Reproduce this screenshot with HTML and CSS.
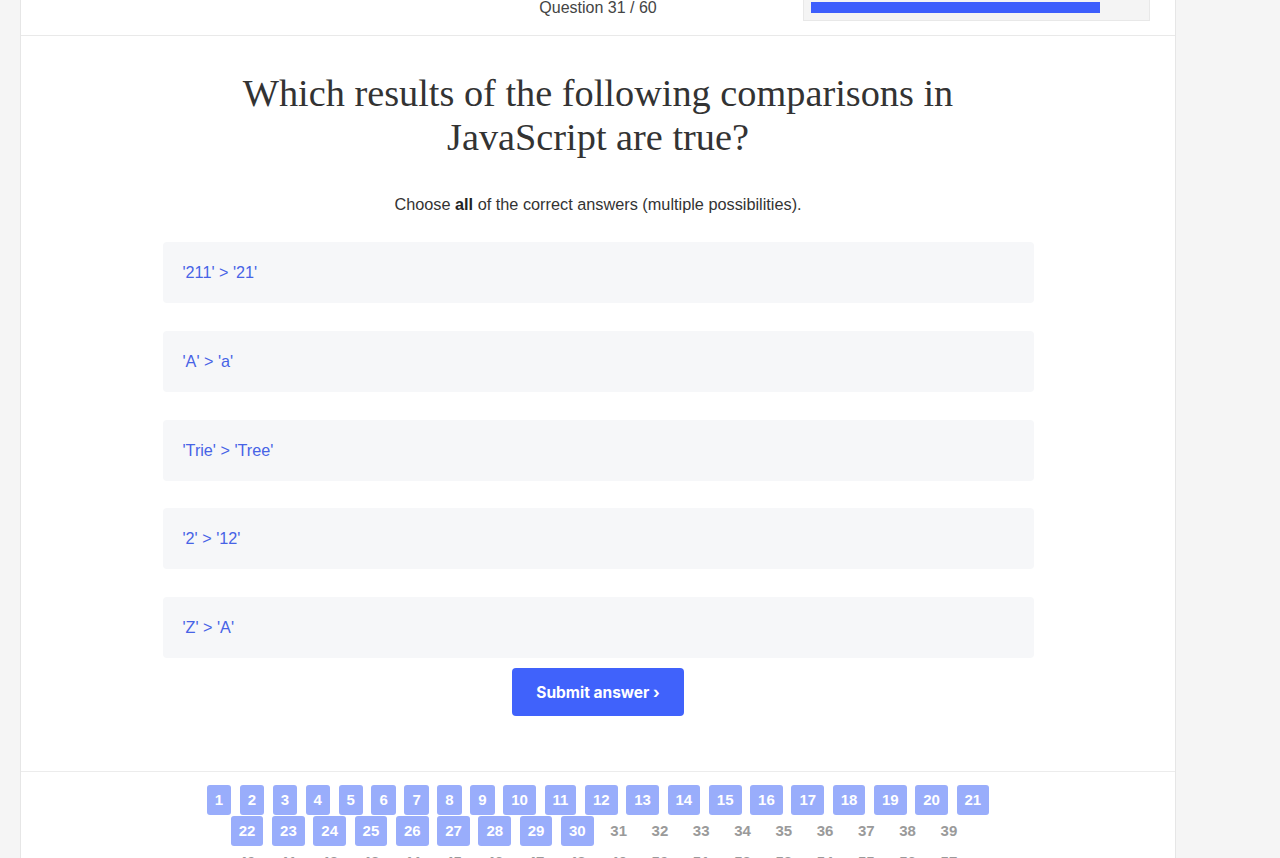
FILE: index.html
```html
<!DOCTYPE html>
<html lang="en">
<head>
<meta charset="utf-8">
<title>Question 31 / 60</title>
<link rel="stylesheet" href="styles.css">
</head>
<body>
<div class="page">
  <header class="quiz-header">
    <div class="header-left"></div>
    <div class="counter">Question 31 / 60</div>
    <div class="progress"><div class="progress-bar" style="width:289px"></div></div>
  </header>

  <main class="quiz-main">
    <h1 class="question">Which results of the following comparisons in JavaScript are true?</h1>
    <p class="hint">Choose <b>all</b> of the correct answers (multiple possibilities).</p>

    <ul class="answers">
      <li class="answer">'211' &gt; '21'</li>
      <li class="answer">'A' &gt; 'a'</li>
      <li class="answer">'Trie' &gt; 'Tree'</li>
      <li class="answer">'2' &gt; '12'</li>
      <li class="answer">'Z' &gt; 'A'</li>
    </ul>

    <div class="actions">
      <button class="submit">Submit answer ›</button>
    </div>
  </main>

  <footer class="pager">
    <div class="pager-row">
      <span class="pg done">1</span><span class="pg done">2</span><span class="pg done">3</span><span class="pg done">4</span><span class="pg done">5</span><span class="pg done">6</span><span class="pg done">7</span><span class="pg done">8</span><span class="pg done">9</span><span class="pg done">10</span><span class="pg done">11</span><span class="pg done">12</span><span class="pg done">13</span><span class="pg done">14</span><span class="pg done">15</span><span class="pg done">16</span><span class="pg done">17</span><span class="pg done">18</span><span class="pg done">19</span><span class="pg done">20</span><span class="pg done">21</span>
    </div>
    <div class="pager-row">
      <span class="pg done">22</span><span class="pg done">23</span><span class="pg done">24</span><span class="pg done">25</span><span class="pg done">26</span><span class="pg done">27</span><span class="pg done">28</span><span class="pg done">29</span><span class="pg done">30</span><span class="pg">31</span><span class="pg">32</span><span class="pg">33</span><span class="pg">34</span><span class="pg">35</span><span class="pg">36</span><span class="pg">37</span><span class="pg">38</span><span class="pg">39</span>
    </div>
    <div class="pager-row">
      <span class="pg">40</span><span class="pg">41</span><span class="pg">42</span><span class="pg">43</span><span class="pg">44</span><span class="pg">45</span><span class="pg">46</span><span class="pg">47</span><span class="pg">48</span><span class="pg">49</span><span class="pg">50</span><span class="pg">51</span><span class="pg">52</span><span class="pg">53</span><span class="pg">54</span><span class="pg">55</span><span class="pg">56</span><span class="pg">57</span>
    </div>
    <div class="pager-row">
      <span class="pg">58</span><span class="pg">59</span><span class="pg">60</span>
    </div>
  </footer>
</div>
</body>
</html>
```

FILE: styles.css
```css
html, body {
  margin: 0;
  padding: 0;
}

body {
  background: #f5f5f5;
  font-family: "Liberation Sans", Arial, sans-serif;
  color: #333;
}

.page {
  width: 1154px;
  margin: -40px 0 0 20px;
  background: #fff;
  border-left: 1px solid #e6e6e6;
  border-right: 1px solid #e6e6e6;
}

.quiz-header {
  display: grid;
  grid-template-columns: 1fr 1fr 1fr;
  align-items: end;
  height: 61px;
  padding-bottom: 14px;
  border-bottom: 1px solid #e9e9e9;
}

.counter {
  justify-self: center;
  font-size: 16px;
  line-height: 18px;
  color: #444;
  margin-bottom: 4px;
}

.progress {
  justify-self: start;
  margin-left: 13px;
  width: 331px;
  padding: 7px;
  background: #f4f4f4;
  border: 1px solid #e8e8e8;
}

.progress-bar {
  height: 11px;
  background: #3d5efc;
}

.quiz-main {
  padding: 35px 0 55px;
}

.question {
  width: 780px;
  margin: 0 auto;
  font-family: "Liberation Serif", "Times New Roman", serif;
  font-weight: normal;
  font-size: 38.3px;
  line-height: 44px;
  text-align: center;
  color: #333;
}

.hint {
  margin: 36px 0 0;
  font-size: 16.3px;
  line-height: 18px;
  text-align: center;
  color: #333;
}

.hint b {
  font-weight: bold;
  color: #222;
}

.answers {
  list-style: none;
  width: 871px;
  margin: 29px auto 0;
  padding: 0;
  display: flex;
  flex-direction: column;
  gap: 27.75px;
}

.answer {
  height: 61px;
  box-sizing: border-box;
  padding: 0 20px;
  display: flex;
  align-items: center;
  background: #f6f7f9;
  border-radius: 4px;
  font-size: 16.2px;
  color: #4763e6;
}

.actions {
  display: flex;
  justify-content: center;
  margin-top: 10px;
}

.submit {
  width: 172px;
  height: 48px;
  border: none;
  border-radius: 4px;
  background: #4062fb;
  color: #fff;
  font-family: Inter, "Liberation Sans", sans-serif;
  font-weight: 700;
  font-size: 15.5px;
  cursor: pointer;
}

.pager {
  border-top: 1px solid #ececec;
  padding-top: 13px;
  display: flex;
  flex-direction: column;
  gap: 1px;
}

.pager-row {
  display: flex;
  justify-content: center;
  gap: 8.6px;
}

.pg {
  box-sizing: border-box;
  height: 30px;
  line-height: 30px;
  padding: 0 8px;
  font-size: 15px;
  font-weight: bold;
  color: #9a9a9a;
  border-radius: 3px;
}

.pg.done {
  background: #99adfb;
  color: #fff;
}
```
